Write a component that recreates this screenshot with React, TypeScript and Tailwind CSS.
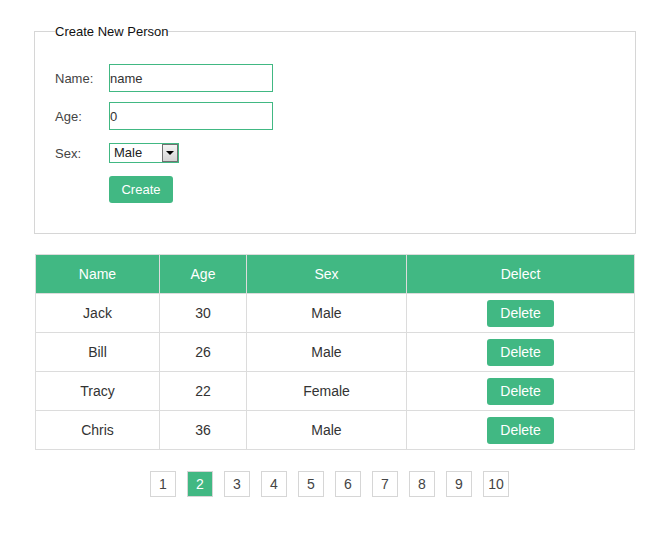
import { useState } from 'react';

type Person = { name: string; age: number; sex: string };

const initialPeople: Person[] = [
  { name: 'Jack', age: 30, sex: 'Male' },
  { name: 'Bill', age: 26, sex: 'Male' },
  { name: 'Tracy', age: 22, sex: 'Female' },
  { name: 'Chris', age: 36, sex: 'Male' },
];

const pages = [1, 2, 3, 4, 5, 6, 7, 8, 9, 10];

export default function App() {
  const [people, setPeople] = useState<Person[]>(initialPeople);
  const [name, setName] = useState('name');
  const [age, setAge] = useState('0');
  const [page, setPage] = useState(2);

  const handleCreate = () => {
    setPeople([...people, { name, age: Number(age) || 0, sex: 'Male' }]);
  };

  return (
    <div className="font-['Liberation_Sans',Arial,sans-serif] text-[#333] w-[671px] min-h-[533px] bg-white">
      {/* Create form */}
      <fieldset className="ml-[34px] mt-[23px] w-[602px] border border-[#d6d6d6] px-[20px]">
        <legend className="text-[13px] leading-[17px] text-[#111]">Create New Person</legend>

        <div className="mt-[24px] flex items-center h-[28px]">
          <label className="w-[54px] pt-[1px] text-[13px] text-[#444]">Name:</label>
          <input
            value={name}
            onChange={(e) => setName(e.target.value)}
            className="w-[164px] h-[28px] border border-[#41b883] px-0 text-[13px] text-[#333] outline-none"
          />
        </div>

        <div className="mt-[10px] flex items-center h-[28px]">
          <label className="w-[54px] pt-[1px] text-[13px] text-[#444]">Age:</label>
          <input
            value={age}
            onChange={(e) => setAge(e.target.value)}
            className="w-[164px] h-[28px] border border-[#41b883] px-0 text-[13px] text-[#333] outline-none"
          />
        </div>

        <div className="mt-[13px] flex items-center h-[20px]">
          <label className="w-[54px] pt-[1px] text-[13px] text-[#444]">Sex:</label>
          <div className="w-[70px] h-[20px] border border-[#41b883] flex items-center justify-between">
            <span className="pl-[4px] text-[13px] text-[#222]">Male</span>
            <span className="w-[16px] h-[18px] border border-[#707070] bg-gradient-to-b from-[#f4f4f4] to-[#d4d4d4] flex items-center justify-center">
              <span className="w-0 h-0 border-l-[4px] border-r-[4px] border-t-[4px] border-l-transparent border-r-transparent border-t-black" />
            </span>
          </div>
        </div>

        <div className="mt-[13px] pl-[54px] pb-[30px]">
          <button
            onClick={handleCreate}
            className="w-[64px] h-[27px] rounded-[3px] bg-[#41b883] text-white text-[13px]"
          >
            Create
          </button>
        </div>
      </fieldset>

      {/* People table */}
      <table className="ml-[35px] mt-[20px] w-[600px] border-collapse text-[14px] text-center">
        <thead>
          <tr className="h-[39px] bg-[#41b883] text-white">
            <th className="w-[124px] border border-[#dcdcdc] font-normal">Name</th>
            <th className="w-[87px] border border-[#dcdcdc] font-normal">Age</th>
            <th className="w-[160px] border border-[#dcdcdc] font-normal">Sex</th>
            <th className="border border-[#dcdcdc] font-normal">Delect</th>
          </tr>
        </thead>
        <tbody>
          {people.map((p, i) => (
            <tr key={i} className="h-[39px]">
              <td className="border border-[#dcdcdc]">{p.name}</td>
              <td className="border border-[#dcdcdc]">{p.age}</td>
              <td className="border border-[#dcdcdc]">{p.sex}</td>
              <td className="border border-[#dcdcdc]">
                <button
                  onClick={() => setPeople(people.filter((_, j) => j !== i))}
                  className="w-[67px] h-[27px] rounded-[3px] bg-[#41b883] text-white text-[14px] align-middle"
                >
                  Delete
                </button>
              </td>
            </tr>
          ))}
        </tbody>
      </table>

      {/* Pagination */}
      <div className="ml-[35px] w-[600px] mt-[21px] flex justify-center">
        {pages.map((n) => (
          <button
            key={n}
            onClick={() => setPage(n)}
            className={`mr-[11px] w-[26px] h-[26px] border border-[#d6d6d6] text-[14px] flex items-center justify-center ${
              page === n ? 'bg-[#41b883] text-white' : 'bg-white text-[#444]'
            }`}
          >
            {n}
          </button>
        ))}
      </div>
    </div>
  );
}
